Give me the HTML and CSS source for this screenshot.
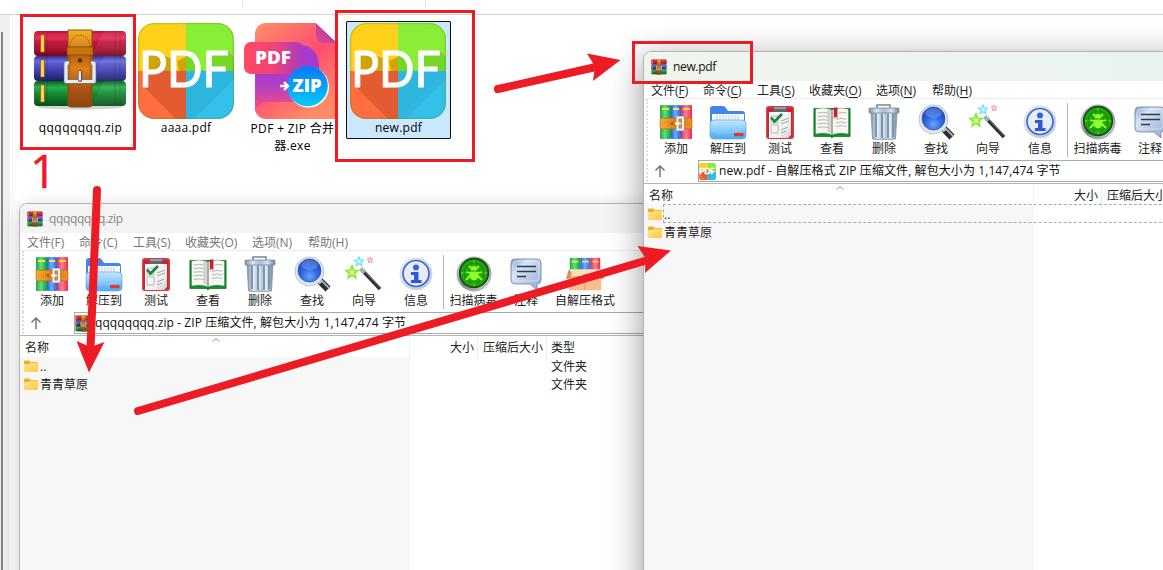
FILE: index.html
```html
<!DOCTYPE html>
<html lang="zh-CN">
<head>
<meta charset="utf-8">
<title>new.pdf</title>
<link rel="stylesheet" href="styles.css">
</head>
<body>
<svg class="defs" width="0" height="0" aria-hidden="true">
  <defs>
    <linearGradient id="gRed" x2="0" y2="1"><stop offset="0" stop-color="#a8173a"/><stop offset=".12" stop-color="#d8264b"/><stop offset=".3" stop-color="#e0305a"/><stop offset=".42" stop-color="#c41a40"/><stop offset=".75" stop-color="#a41232"/><stop offset="1" stop-color="#6c0820"/></linearGradient>
    <linearGradient id="gBlue" x2="0" y2="1"><stop offset="0" stop-color="#30308c"/><stop offset=".2" stop-color="#6a6ae0"/><stop offset=".4" stop-color="#5050c4"/><stop offset=".7" stop-color="#36369c"/><stop offset="1" stop-color="#1e1e66"/></linearGradient>
    <linearGradient id="gGreen" x2="0" y2="1"><stop offset="0" stop-color="#0c5a20"/><stop offset=".25" stop-color="#27b04c"/><stop offset=".45" stop-color="#189038"/><stop offset="1" stop-color="#075019"/></linearGradient>
    <linearGradient id="gBelt" x2="0" y2="1"><stop offset="0" stop-color="#f2b51e"/><stop offset=".2" stop-color="#d98a1c"/><stop offset=".34" stop-color="#b8640e"/><stop offset=".5" stop-color="#de7e18"/><stop offset=".7" stop-color="#b85a14"/><stop offset="1" stop-color="#8a4512"/></linearGradient>
    <linearGradient id="gBook" x2="1" y2="0"><stop offset="0" stop-color="#f4a818"/><stop offset=".5" stop-color="#ffe868"/><stop offset="1" stop-color="#f09a10"/></linearGradient>
    <linearGradient id="gSheet" x2="0" y2="1"><stop offset="0" stop-color="#a53ccc"/><stop offset=".35" stop-color="#b040c4"/><stop offset="1" stop-color="#ff4c78"/></linearGradient>
    <linearGradient id="gSheetSide" x1="0" y1="0" x2=".6" y2="1"><stop offset="0" stop-color="#ff9068"/><stop offset=".55" stop-color="#ff4c70"/><stop offset="1" stop-color="#ff8a68"/></linearGradient>
    <linearGradient id="gFold" x1="1" x2="0" y2="1"><stop offset="0" stop-color="#8a40d0"/><stop offset="1" stop-color="#f0457e"/></linearGradient>
    <linearGradient id="gTag" x2="1" y2="0"><stop offset="0" stop-color="#ff4a62"/><stop offset=".5" stop-color="#f04378"/><stop offset="1" stop-color="#a83ac4"/></linearGradient>
    <linearGradient id="gZip" x2="0" y2="1"><stop offset="0" stop-color="#0878f8"/><stop offset="1" stop-color="#08c8f8"/></linearGradient>
    <linearGradient id="gFolder" x2="1" y2="1"><stop offset="0" stop-color="#ffe79a"/><stop offset="1" stop-color="#ffc83d"/></linearGradient>
    <linearGradient id="gBlueFolder" x2="0" y2="1"><stop offset="0" stop-color="#c2e8ff"/><stop offset="1" stop-color="#58b0fa"/></linearGradient>
    <linearGradient id="gPaper" x2="1" y2="1"><stop offset="0" stop-color="#fff"/><stop offset=".7" stop-color="#efefef"/><stop offset="1" stop-color="#c9c9c9"/></linearGradient>
    <linearGradient id="gBin" x2="1" y2="0"><stop offset="0" stop-color="#7d91a9"/><stop offset=".25" stop-color="#dae5ef"/><stop offset=".5" stop-color="#a9bccf"/><stop offset=".75" stop-color="#d7e2ec"/><stop offset="1" stop-color="#71859d"/></linearGradient>
    <radialGradient id="gLens" cx=".5" cy=".75" r=".7"><stop offset="0" stop-color="#69a8ff"/><stop offset=".5" stop-color="#3068e2"/><stop offset="1" stop-color="#1c3fae"/></radialGradient>
    <linearGradient id="gRing" x2="1" y2="1"><stop offset="0" stop-color="#f4f6f8"/><stop offset="1" stop-color="#b6bdc7"/></linearGradient>
    <linearGradient id="gSteel" x2="1" y2="1"><stop offset="0" stop-color="#f3f4f6"/><stop offset=".5" stop-color="#7c828c"/><stop offset="1" stop-color="#dfe2e7"/></linearGradient>
    <linearGradient id="gNote" x2="1" y2="1"><stop offset="0" stop-color="#7f9dcb"/><stop offset=".3" stop-color="#d6e2f4"/><stop offset="1" stop-color="#8fa9cf"/></linearGradient>
    <linearGradient id="vGreen" x2="1" y2="0"><stop offset="0" stop-color="#18a844"/><stop offset=".45" stop-color="#5fe07c"/><stop offset="1" stop-color="#129a3a"/></linearGradient>
    <linearGradient id="vBlue" x2="1" y2="0"><stop offset="0" stop-color="#2064dc"/><stop offset=".45" stop-color="#6dacff"/><stop offset="1" stop-color="#2464d8"/></linearGradient>
    <linearGradient id="vRed" x2="1" y2="0"><stop offset="0" stop-color="#ea2854"/><stop offset=".45" stop-color="#ff8098"/><stop offset="1" stop-color="#e82a56"/></linearGradient>
    <linearGradient id="gStrap" x2="1" y2="0"><stop offset="0" stop-color="#f7a834"/><stop offset=".5" stop-color="#d47612"/><stop offset="1" stop-color="#e88f24"/></linearGradient>
    <clipPath id="tile"><rect width="96" height="96" rx="16"/></clipPath>
  </defs>

  <symbol id="i-rar" viewBox="0 0 96 82" preserveAspectRatio="none">
    <ellipse cx="48" cy="79" rx="43" ry="2.500" fill="#cfd8cf"/>
    <rect x="2" y="3" width="92" height="25" rx="4" fill="url(#gRed)"/>
    <rect x="2" y="28" width="92" height="25" rx="4" fill="url(#gBlue)"/>
    <rect x="2" y="53" width="92" height="25" rx="4" fill="url(#gGreen)"/>
    <path d="M15 3v75M83 3v75M88 3v75" stroke="#000" stroke-opacity=".16"/>
    <path d="M59 28l13-25h22v25zM59 53l13-25h22v25zM59 78l13-25h22v25z" fill="#fff" opacity=".07"/>
    <g fill="url(#gBook)" stroke="#9b5413" stroke-width=".6"><rect x="8.500" y="7" width="4" height="17"/><rect x="8.500" y="32" width="4" height="17"/><rect x="8.500" y="57" width="4" height="17"/></g>
    <path d="M36 2h24v76l-3 1H39l-3-1z" fill="url(#gBelt)" stroke="#8d4c0b"/>
    <path d="M38 19a10 12 0 0 1 20 0M38 28v48M58 28v48" fill="none" stroke="#8b4b06" stroke-width=".8" stroke-dasharray="1.500 1"/>
    <rect x="35" y="19" width="26" height="8" fill="#c5760f" stroke="#824408" stroke-width=".8"/>
    <circle cx="48" cy="32.500" r="2.300" fill="#572b08"/>
    <path d="M37 35H34v18.500h28V35h-3" fill="none" stroke="#757b84" stroke-width="4.400" stroke-linejoin="round"/>
    <path d="M37 35H34v18.500h28V35h-3" fill="none" stroke="#e6e9ee" stroke-width="3.200" stroke-linejoin="round"/>
    <path d="M48 44v8" stroke="#50545b" stroke-width="4.200" stroke-linecap="round"/>
    <path d="M47.800 44v7.500" stroke="#e5e9ee" stroke-width="2.400" stroke-linecap="round"/>
  </symbol>

  <symbol id="i-pdf" viewBox="0 0 96 96">
    <g clip-path="url(#tile)">
      <path fill="#ffd11a" d="M0 0h48v48H0z"/><path fill="#8aee36" d="M48 0h48v48H48z"/>
      <path fill="#ff6d40" d="M0 48h48v48H0z"/><path fill="#34c1e9" d="M48 48h48v48H48z"/>
      <path d="M6 64L38 96h10V48H6z" fill="#8a2200" opacity=".24"/>
      <path d="M11 46V31h10l14 5 2 12H11zM48 48V34l-9 4 2 10z" fill="#a07800" opacity=".5"/>
      <path d="M48 48V30l12 8 5 10h31V34l-6-6-22 6v14z" fill="#4a9c00" opacity=".3"/>
      <path d="M48 48h48v8L56 96h-8z" fill="#146c9c" opacity=".12"/>
    </g>
    <rect x=".7" y=".7" width="94.600" height="94.600" rx="15.500" fill="none" stroke="#4b9800" stroke-opacity=".3" stroke-width="1.200"/>
  </symbol>

  <symbol id="i-exe" viewBox="0 0 91 97">
    <path d="M22 0h50l19 19v77H22A11 11 0 0 1 11 85V11A11 11 0 0 1 22 0z" fill="url(#gSheetSide)"/>
    <path d="M11 48h48v31H24c-7 1-12 4-13 10z" fill="url(#gSheet)"/>
    <path d="M58 22c10 1 17 9 17 21v8H48V22z" fill="#a63bcd"/>
    <path d="M72 0l19 18v2H80c-6 0-8-4-8-8z" fill="url(#gFold)"/>
    <path d="M72 0h19v18z" fill="#fff"/>
    <rect y="19" width="59" height="32" rx="7" fill="url(#gTag)"/>
    <circle cx="64.500" cy="64" r="20.500" fill="#fff"/><circle cx="63.500" cy="63" r="20.300" fill="url(#gZip)"/>
    <path d="M36 63h7M40 59l4 4-4 4" fill="none" stroke="#fff" stroke-width="2.300"/>
  </symbol>

  <symbol id="i-folder" viewBox="0 0 14 12"><path d="M0 1.500Q0 .5 1 .5h4l1.500 1.500H13q1 0 1 1V5H0z" fill="#f6ac1c"/><path d="M0 4h5l1.500-1.300H13q1 0 1 1V11q0 1-1 1H1q-1 0-1-1z" fill="url(#gFolder)"/></symbol>

  <symbol id="i-add" viewBox="0 0 34 36">
    <rect x="1" y="1" width="11" height="34" rx="1" fill="url(#vGreen)"/><rect x="12" y="1" width="10" height="34" rx="1" fill="url(#vBlue)"/><rect x="22" y="1" width="11" height="34" rx="1" fill="url(#vRed)"/>
    <path d="M3 4h7v2H3zm11 0h6v2h-6zm10 0h7v2h-7z" fill="#ffe13b"/>
    <rect x="1" y="14" width="32" height="11" rx="1.500" fill="url(#gStrap)" stroke="#b9660f" stroke-width=".6"/>
    <path d="M3 16h28M3 23h28" stroke="#ffc76a" stroke-width=".5" stroke-dasharray="1 1"/>
    <circle cx="13" cy="19.500" r="1" fill="#6d320a"/><rect x="18.500" y="13.500" width="5.500" height="12" fill="none" stroke="#8a909d" stroke-width="2.800"/><rect x="18.500" y="13.500" width="5.500" height="12" fill="none" stroke="#f1f3f5" stroke-width="2"/><path d="M16 19.500h6" stroke="#fff" stroke-width="2"/>
  </symbol>
  <symbol id="i-extract" viewBox="0 0 38 36">
    <path d="M1 5q0-3 3-3h10q2 0 3 2l2 3h14q3 0 3 3v8H1z" fill="#4285ef"/><path d="M3 10h32v18H3z" fill="#f8fbfe"/>
    <path d="M8 11v5m3-5v5m3-5v5m3-5v5m3-5v5m3-5v5m3-5v5m3-5v5" stroke="#c1cdd9"/>
    <path d="M1 20q0-4 4-4h28q4 0 4 4v11q0 4-4 4H5q-4 0-4-4z" fill="url(#gBlueFolder)" stroke="#4b9ef4" stroke-width=".6"/>
    <path d="M1 28q8 4 25 1t11-5v7q0 4-4 4H5q-4 0-4-4z" fill="#3f9af2" opacity=".25"/><rect x="25" y="29" width="9.500" height="3.300" fill="#ed3424"/>
  </symbol>
  <symbol id="i-test" viewBox="0 0 30 36">
    <rect x="1" y="2" width="28" height="33" rx="3" fill="#c9252f"/><rect x="1.700" y="3" width="26.500" height="31" rx="2" fill="none" stroke="#ed6268" stroke-width=".7"/>
    <path d="M4 8h22v23l-3 3H4z" fill="url(#gPaper)"/><rect x="8" y="3" width="14" height="5" rx="1" fill="#5f666d"/><path d="M9 4h12" stroke="#cfd3d6"/>
    <path d="M6 12h7v7H6zm0 9h7v8H6z" fill="none" stroke="#a9a9a9" stroke-width=".8"/><path d="M16 17l8-3M16 20l8-3M16 26l7-3M16 29l5-2" stroke="#989898" stroke-width=".9"/>
    <path d="M6 13.500l3.500 4L17 10" fill="none" stroke="#19853a" stroke-width="2.600"/>
  </symbol>
  <symbol id="i-view" viewBox="0 0 42 36">
    <path d="M1 3h40v31H24l-3 1-3-1H1z" fill="#198c2e" stroke="#10641d" stroke-width=".8"/>
    <path d="M3 4q11-3 18 1 7-4 18-1v27q-11-2-18 1-7-3-18-1z" fill="#f6f6f2"/><path d="M21 5v27" stroke="#898982" stroke-width="1.500"/>
    <path d="M16 4q4 0 5 2v25q-2-2-5-2z" fill="#aaa" opacity=".45"/><path d="M5 8q7-1 12 0M5 12q7-1 12 0M5 16q7-1 12 0M5 20q7-1 12 0M5 24q7-1 12 0M28 8q5-1 9 0M25 15q7-2 12 0M25 19q7-2 12 0M25 23q7-2 12 0" fill="none" stroke="#aeb3ad"/>
    <path d="M23 2h4v12l-2-2-2 2z" fill="#c71f2d"/>
  </symbol>
  <symbol id="i-delete" viewBox="0 0 32 36">
    <path d="M9 4V1h13v3" fill="none" stroke="#7a8694" stroke-width="1.500"/><path d="M3 8h26l-1.500 27q-11 2-23 0z" fill="url(#gBin)" stroke="#8496a8" stroke-width=".8"/>
    <path d="M8 10v23M14 10v24M20 10v24M25 10v23" stroke="#7890a8" stroke-width="1.800"/><path d="M10 10v23M16 10v24M22 10v24" stroke="#e9f0f6" stroke-width="1.300"/>
    <rect x="1" y="4" width="30" height="5" rx="1" fill="url(#gBin)" stroke="#7286a0" stroke-width=".8"/>
  </symbol>
  <symbol id="i-find" viewBox="0 0 38 36">
    <path d="M27 25l8 8" stroke="#2a2e34" stroke-width="7"/><path d="M28 24l8 8" stroke="#a9b0b8" stroke-width="1.800"/><path d="M24 23l4 4" stroke="#bac2ca" stroke-width="4"/>
    <circle cx="16.500" cy="15.500" r="14.500" fill="#dfe6ed" stroke="#bcc6d2"/><circle cx="16.500" cy="14.500" r="11.500" fill="url(#gLens)" stroke="#3658a8" stroke-width=".7"/>
    <ellipse cx="16.500" cy="9" rx="8.500" ry="5" fill="#8cb3ff" opacity=".4"/>
  </symbol>
  <symbol id="i-wizard" viewBox="0 0 38 36">
    <path d="M17 14l18 19" stroke="#303336" stroke-width="3.600"/><path d="M18 13.500l18 19" stroke="#858b90" stroke-width=".8"/><path d="M15.500 12.500l4 4" stroke="#a8adb2" stroke-width="4"/>
    <path d="M7 10l1.600 4.200 4.400.3-3.400 2.900 1.200 4.400L7 19.300l-3.800 2.500 1.200-4.400L1 14.500l4.400-.3z" fill="#d9ff9c" stroke="#83ed27" stroke-width="1.600"/>
    <path d="M14 1l1.200 3 3.300.2-2.600 2 .9 3.300-2.800-1.900-2.800 1.900.9-3.300-2.600-2 3.300-.2z" fill="#e0fbff" stroke="#6de5fb" stroke-width="1.300"/>
    <path d="M25 1l.8 2 2.200.1-1.700 1.400.6 2.200-1.900-1.300L23.100 6.700l.6-2.200L22 3.100l2.200-.1z" fill="#ffe1e1" stroke="#f69b9d"/>
  </symbol>
  <symbol id="i-info" viewBox="0 0 34 36"><circle cx="17" cy="18" r="16" fill="url(#gRing)" stroke="#d5dae0"/><circle cx="17" cy="17.500" r="13" fill="#e8ecf2" stroke="#3969df" stroke-width="1.700"/><circle cx="17" cy="11.500" r="3" fill="#3164dd"/><path d="M12 16h7.500v8h3v3H12v-3h3v-5h-3z" fill="#285bda"/></symbol>
  <symbol id="i-scan" viewBox="0 0 36 36">
    <circle cx="18" cy="18" r="17" fill="url(#gSteel)" stroke="#8e949c" stroke-width=".7"/><circle cx="18" cy="17" r="14.300" fill="#22a50b" stroke="#124f12" stroke-width="1.700"/>
    <path d="M18 4v26M5 17h26" stroke="#72e038" stroke-dasharray="4 18"/><circle cx="18" cy="17" r="10" fill="none" stroke="#137b09" stroke-width=".8"/>
    <path d="M13 10l3 3m7-3l-3 3M10 16l4 1m12-1l-4 1M10 24l4-4m12 4l-4-4" stroke="#8cff2c" stroke-width="1.800"/><circle cx="18" cy="13" r="3" fill="#8cff2c"/><ellipse cx="18" cy="19" rx="4.700" ry="5.200" fill="#8cff2c"/><path d="M13 15h10" stroke="#27951a"/>
  </symbol>
  <symbol id="i-note" viewBox="0 0 32 36"><path d="M5 3h22q4 0 4 4v17q0 4-4 4v6l-7-6H5q-4 0-4-4V7q0-4 4-4z" fill="url(#gNote)" stroke="#7c95bd"/><rect x="3" y="5" width="26" height="20" rx="4" fill="none" stroke="#eef4fc" stroke-opacity=".6"/><path d="M7 10.500h19M7 15.500h19M7 20.500h9" stroke="#343c4a" stroke-width="1.500"/></symbol>
  <symbol id="i-sfx" viewBox="0 0 40 36"><rect x="4" y="1" width="11" height="20" fill="url(#vGreen)"/><rect x="15" y="1" width="11" height="20" fill="url(#vBlue)"/><rect x="26" y="1" width="10" height="20" fill="url(#vRed)"/><path d="M6 4h7v2H6zm11 0h7v2h-7zm11 0h6v2h-6z" fill="#ffe13b"/><path d="M3 13h34v22H3z" fill="#ffe3b4"/><path d="M3 21h34v14H3z" fill="#fbbd8c"/><path d="M3 13l-3 10h4l2-6zM37 13l3 10h-4l-2-6z" fill="#d98b57"/><path d="M20 18v17M3 21h34" stroke="#e09a68"/></symbol>
</svg>

<main class="desktop">
  <div class="topstrip"><i></i><i></i></div>
  <div class="explorer">
    <div class="gutter"></div>
    <div class="files">
      <figure class="file f-zip"><svg class="ico-rar"><use href="#i-rar"/></svg><figcaption>qqqqqqqq.zip</figcaption></figure>
      <figure class="file f-pdf"><svg class="ico-big" viewBox="0 0 96 96"><use href="#i-pdf"/><text class="pdf-word" x="1" y="63.500" textLength="90" lengthAdjust="spacingAndGlyphs">PDF</text></svg><figcaption>aaaa.pdf</figcaption></figure>
      <figure class="file f-exe"><svg class="ico-exe" viewBox="0 0 91 97"><use href="#i-exe"/><text class="heavy" x="11" y="41" textLength="36" lengthAdjust="spacingAndGlyphs">PDF</text><text class="heavy" x="48.500" y="69" textLength="29" lengthAdjust="spacingAndGlyphs">ZIP</text></svg><figcaption>PDF + ZIP 合并<br>器.exe</figcaption></figure>
      <figure class="file f-new"><svg class="ico-big" viewBox="0 0 96 96"><use href="#i-pdf"/><text class="pdf-word" x="1" y="63.500" textLength="90" lengthAdjust="spacingAndGlyphs">PDF</text></svg><figcaption>new.pdf</figcaption></figure>
    </div>
  </div>

  <section class="window win-zip">
    <header class="title"><svg><use href="#i-rar"/></svg><span>qqqqqqqq.zip</span></header>
    <nav class="menu"><span>文件(F)</span><span>命令(C)</span><span>工具(S)</span><span>收藏夹(O)</span><span>选项(N)</span><span>帮助(H)</span></nav>
    <div class="tools">
      <div class="tool"><svg><use href="#i-add"/></svg>添加</div>
      <div class="tool"><svg><use href="#i-extract"/></svg>解压到</div>
      <div class="tool"><svg><use href="#i-test"/></svg>测试</div>
      <div class="tool"><svg><use href="#i-view"/></svg>查看</div>
      <div class="tool"><svg><use href="#i-delete"/></svg>删除</div>
      <div class="tool"><svg><use href="#i-find"/></svg>查找</div>
      <div class="tool"><svg><use href="#i-wizard"/></svg>向导</div>
      <div class="tool"><svg><use href="#i-info"/></svg>信息</div>
      <i class="sep"></i>
      <div class="tool scan"><svg><use href="#i-scan"/></svg>扫描病毒</div>
      <div class="tool"><svg><use href="#i-note"/></svg>注释</div>
      <div class="tool sfx"><svg><use href="#i-sfx"/></svg>自解压格式</div>
    </div>
    <div class="address">
      <div class="up"><svg viewBox="0 0 12 12"><path d="M6 12V1M1.500 5.500L6 1l4.500 4.500"/></svg></div>
      <div class="path"><svg><use href="#i-rar"/></svg><span>qqqqqqqq.zip - ZIP 压缩文件, 解包大小为 1,147,474 字节</span></div>
    </div>
    <div class="list">
      <div class="row head"><div>名称<svg class="caret" viewBox="0 0 8 4"><path d="M.5 3.500L4 .5l3.500 3"/></svg></div><div class="num">大小</div><div class="num">压缩后大小</div><div>类型</div></div>
      <div class="row"><div class="name"><svg><use href="#i-folder"/></svg><span>..</span></div><div></div><div></div><div>文件夹</div></div>
      <div class="row"><div class="name"><svg><use href="#i-folder"/></svg><span>青青草原</span></div><div></div><div></div><div>文件夹</div></div>
      <div class="row rest"><div class="name"></div></div>
    </div>
  </section>

  <section class="window win-pdf">
    <header class="title"><svg><use href="#i-rar"/></svg><span>new.pdf</span></header>
    <nav class="menu"><span>文件(<u>F</u>)</span><span>命令(<u>C</u>)</span><span>工具(<u>S</u>)</span><span>收藏夹(<u>O</u>)</span><span>选项(<u>N</u>)</span><span>帮助(<u>H</u>)</span></nav>
    <div class="tools">
      <div class="tool"><svg><use href="#i-add"/></svg>添加</div>
      <div class="tool"><svg><use href="#i-extract"/></svg>解压到</div>
      <div class="tool"><svg><use href="#i-test"/></svg>测试</div>
      <div class="tool"><svg><use href="#i-view"/></svg>查看</div>
      <div class="tool"><svg><use href="#i-delete"/></svg>删除</div>
      <div class="tool"><svg><use href="#i-find"/></svg>查找</div>
      <div class="tool"><svg><use href="#i-wizard"/></svg>向导</div>
      <div class="tool"><svg><use href="#i-info"/></svg>信息</div>
      <i class="sep"></i>
      <div class="tool scan"><svg><use href="#i-scan"/></svg>扫描病毒</div>
      <div class="tool"><svg><use href="#i-note"/></svg>注释</div>
    </div>
    <div class="address">
      <div class="up"><svg viewBox="0 0 12 12"><path d="M6 12V1M1.500 5.500L6 1l4.500 4.500"/></svg></div>
      <div class="path"><svg viewBox="0 0 96 96"><use href="#i-pdf"/><text class="pdf-word small" x="1" y="63.500" textLength="90" lengthAdjust="spacingAndGlyphs">PDF</text></svg><span>new.pdf - 自解压格式 ZIP 压缩文件, 解包大小为 1,147,474 字节</span></div>
    </div>
    <div class="list">
      <div class="row head"><div>名称<svg class="caret" viewBox="0 0 8 4"><path d="M.5 3.500L4 .5l3.500 3"/></svg></div><div class="num">大小</div><div class="num">压缩后大小</div><div></div></div>
      <div class="row focus"><div class="name"><svg><use href="#i-folder"/></svg><span>..</span></div></div>
      <div class="row"><div class="name"><svg><use href="#i-folder"/></svg><span>青青草原</span></div></div>
      <div class="row rest"><div class="name"></div></div>
    </div>
  </section>

  <svg class="marks" viewBox="0 0 1163 570">
    <g fill="none" stroke="#ed1c24" stroke-width="3"><path d="M21.500 15.500h113v133h-113zM336.500 11.500h137v149h-137zM633.500 42.500h118v40h-118z"/></g>
    <g fill="none" stroke="#ed1c24" stroke-width="8" stroke-linecap="round"><path d="M97 190L90.500 348M498 89L596 67M138 411L648 260"/></g>
    <g fill="#ed1c24"><path d="M89 372.500L76.500 341l14 6 14-5zM620.500 60L587 53.500l8 13-2 14.500zM671 250.500L637.500 246l8 12-.500 15z"/></g>
    <text class="step" x="30" y="188">1</text>
  </svg>
</main>
</body>
</html>
```
FILE: styles.css
```css
body {
  margin: 0;
  font: 12px/18px "Open Sans", "Noto Sans CJK SC", sans-serif;
  color: #222;
}

.defs { position: absolute; }

.desktop {
  position: relative;
  width: 1163px;
  height: 570px;
  overflow: hidden;
  background: #fff;
}

.topstrip {
  box-sizing: border-box;
  height: 15px;
  display: flex;
  gap: 182px;
  padding-left: 242px;
  border-bottom: 1px solid #d2d2d2;
}
.topstrip i { width: 1px; height: 8px; background: #e3e3e3; }

.explorer { display: flex; height: 555px; }
.gutter {
  box-sizing: border-box;
  width: 13px;
  border-right: 1px solid #f3f3f3;
  background:
    linear-gradient(#858585, #858585) 1px 17px / 2px 100% no-repeat,
    linear-gradient(90deg, #f0f0f0 10px, #fff 10px);
}

.files { display: flex; height: 150px; }
.file { margin: 0; color: #000; text-align: center; box-sizing: border-box; }
.file svg { display: block; }
.file figcaption { line-height: 17px; white-space: nowrap; letter-spacing: .25px; }
.f-zip { width: 125px; padding: 13px 0 0 19px; }
.f-zip figcaption { margin-top: 9px; padding-right: 9px; letter-spacing: .48px; }
.ico-rar { width: 96px; height: 82px; }
.f-pdf { width: 96px; padding-top: 8px; }
.ico-big { width: 96px; height: 96px; }
.f-exe { width: 101px; padding: 8px 0 0 10px; overflow: hidden; }
.f-exe figcaption { padding-left: 6px; letter-spacing: .35px; }
.ico-exe { width: 91px; height: 97px; }
.f-new {
  width: 105px;
  height: 118px;
  margin: 6px 0 0 11px;
  padding: 1px 3px;
  border: 1px solid #111;
  border-radius: 1px;
  background: #cce8ff;
}

.pdf-word { font: 50px Lato, sans-serif; fill: #fff; stroke: #fff; stroke-width: 1; stroke-linejoin: round; }
.pdf-word.small { font-size: 46px; stroke-width: 4; }
.heavy { font: 800 17px "Open Sans", sans-serif; fill: #fff; }

.window {
  position: absolute;
  box-sizing: border-box;
  display: flex;
  flex-direction: column;
  border: 1px solid #b4b4b4;
  border-radius: 8px 0 0 0;
  background: #fff;
  overflow: hidden;
}
.win-zip { left: 19px; top: 203px; width: 760px; height: 400px; box-shadow: 0 5px 20px rgba(0, 0, 0, .2); }
.win-pdf { left: 643px; top: 51px; width: 620px; height: 560px; box-shadow: 0 8px 34px rgba(0, 0, 0, .42); }

.title { height: 29px; flex: none; display: flex; align-items: center; gap: 6px; padding-left: 7px; color: #888; background: #f3f3f3; letter-spacing: -.35px; }
.title svg { width: 16px; height: 16px; }
.win-pdf .title { color: #111; background: linear-gradient(90deg, #f0f5ec, #eaf3f3); }

.menu {
  height: 18px;
  line-height: 19px;
  flex: none;
  display: grid;
  box-sizing: border-box;
  grid-template-columns: 52px 54px 52px 67px 56px 60px;
  padding-left: 7px;
  border-bottom: 1px solid #eee;
  color: #777;
  white-space: nowrap;
}
.win-pdf .menu { color: #222; }
.menu u { text-underline-offset: 2px; }

.tools, .up { border-left: 2px dotted #ddd; }
.tools { height: 61px; flex: none; display: flex; margin-left: 2px; padding-left: 2px; }
.tool { width: 52px; flex: none; display: flex; flex-direction: column; align-items: center; padding-top: 5px; white-space: nowrap; box-sizing: border-box; }
.tool svg { width: 38px; height: 36px; }
.sep { width: 1px; height: 54px; margin: 4px 3px 0 1px; background: #b5b5b5; flex: none; }
.scan { width: 53px; }
.sfx { width: 66px; }

.address { height: 22px; flex: none; display: flex; margin-left: 2px; }
.up { width: 47px; flex: none; display: flex; align-items: center; padding-left: 6px; box-sizing: border-box; }
.up svg { width: 12px; height: 12px; fill: none; stroke: #777; stroke-width: 1.5; }
.path {
  flex: 1;
  display: flex;
  align-items: center;
  gap: 3px;
  margin-left: 5px;
  border: 1px solid #aaa;
  border-right: 0;
  box-sizing: border-box;
  white-space: nowrap;
  color: #111;
  letter-spacing: .09px;
}
.path svg { width: 17px; height: 17px; }

.list { flex: 1; display: flex; flex-direction: column; margin-top: 1px; border-top: 1px solid #b4b4b4; }
.row { height: 18px; line-height: 20px; flex: none; display: grid; grid-template-columns: 390px 68px 69px 1fr; }
.row > div { padding-left: 4px; }
.row > .num { padding: 0 3px 0 0; text-align: right; }
.head { height: 21px; line-height: 24px; }
.head > div { border-right: 1px solid #eee; position: relative; }
.head > div:first-child { padding-left: 5px; }
.caret { position: absolute; left: 192px; top: 2px; width: 8px; height: 4px; fill: none; stroke: #999; }
.row > .name { display: flex; gap: 2px; background: #f7f7f7; }
.name svg { width: 14px; height: 12px; margin-top: 3px; }
.rest { flex: 1; }
.focus { position: relative; }
.focus::after { content: ""; position: absolute; inset: -1px 0 0 19px; border: 1px dashed #aaa; }

.marks { position: absolute; inset: 0; width: 1163px; height: 570px; }
.step { font: 46px "Open Sans", sans-serif; fill: #ed1c24; stroke: #ed1c24; stroke-width: .5; }
```
